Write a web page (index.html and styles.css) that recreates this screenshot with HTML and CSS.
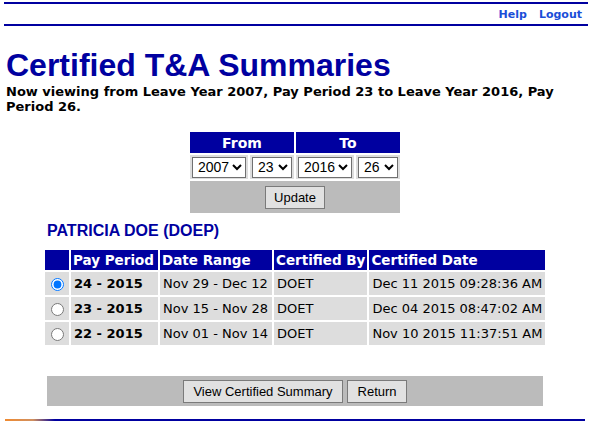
FILE: index.html
```html
<!DOCTYPE html>
<html>
<head>
<meta charset="utf-8">
<link rel="stylesheet" href="styles.css">
</head>
<body>
<div class="page">
  <div class="topbar">
    <a href="#" class="toplink">Help</a>
    <a href="#" class="toplink">Logout</a>
  </div>
  <h1 class="title">Certified T&amp;A Summaries</h1>
  <p class="subtitle">Now viewing from Leave Year 2007, Pay Period 23 to Leave Year 2016, Pay Period 26.</p>

  <table class="range">
    <tr>
      <th colspan="2" class="range-head">From</th>
      <th colspan="2" class="range-head">To</th>
    </tr>
    <tr>
      <td class="range-cell"><select class="sel sel-year"><option>2007</option></select></td>
      <td class="range-cell"><select class="sel sel-pp"><option>23</option></select></td>
      <td class="range-cell"><select class="sel sel-year"><option>2016</option></select></td>
      <td class="range-cell"><select class="sel sel-pp"><option>26</option></select></td>
    </tr>
    <tr>
      <td colspan="4" class="range-action"><button class="btn">Update</button></td>
    </tr>
  </table>

  <h2 class="name">PATRICIA DOE (DOEP)</h2>

  <table class="summary">
    <tr>
      <th class="col-radio"></th>
      <th class="col-pp">Pay Period</th>
      <th class="col-range">Date Range</th>
      <th class="col-by">Certified By</th>
      <th class="col-date">Certified Date</th>
    </tr>
    <tr>
      <td class="radio-cell"><input type="radio" name="pp" checked></td>
      <td class="pp">24 - 2015</td>
      <td>Nov 29 - Dec 12</td>
      <td>DOET</td>
      <td>Dec 11 2015 09:28:36 AM</td>
    </tr>
    <tr>
      <td class="radio-cell"><input type="radio" name="pp"></td>
      <td class="pp">23 - 2015</td>
      <td>Nov 15 - Nov 28</td>
      <td>DOET</td>
      <td>Dec 04 2015 08:47:02 AM</td>
    </tr>
    <tr>
      <td class="radio-cell"><input type="radio" name="pp"></td>
      <td class="pp">22 - 2015</td>
      <td>Nov 01 - Nov 14</td>
      <td>DOET</td>
      <td>Nov 10 2015 11:37:51 AM</td>
    </tr>
  </table>

  <div class="actions">
    <button class="btn btn-wide">View Certified Summary</button>
    <button class="btn btn-wide">Return</button>
  </div>

  <div class="footer-line"></div>
</div>
</body>
</html>
```

FILE: styles.css
```css
html, body {
  margin: 0;
  padding: 0;
  background: #fff;
}
.page {
  width: 584px;
  margin-left: 4px;
  padding-top: 2px;
  font-family: "DejaVu Sans", Verdana, sans-serif;
  color: #000;
}
.topbar {
  border-top: 2px solid #0000a0;
  border-bottom: 2px solid #0000a0;
  height: 20px;
  display: flex;
  justify-content: flex-end;
  align-items: center;
  gap: 12px;
  padding-right: 6px;
}
.toplink {
  font-size: 11px;
  font-weight: bold;
  color: #1a4ed8;
  text-decoration: none;
}
.title {
  font-family: "Liberation Sans", Arial, sans-serif;
  font-size: 32px;
  font-weight: bold;
  color: #0000a0;
  margin: 22px 0 0 2px;
  line-height: 34px;
}
.subtitle {
  font-size: 13px;
  font-weight: bold;
  line-height: 15px;
  margin: 2px 0 0 2px;
  width: 560px;
}
.range {
  margin: 16px auto 0;
  border-collapse: separate;
  border-spacing: 2px;
  position: relative;
  left: -1px;
}
.range-head {
  background: #0000a0;
  color: #fff;
  font-size: 14px;
  font-weight: bold;
  height: 21px;
  padding: 0;
  text-align: center;
}
.range-cell {
  background: #dddddd;
  padding: 1px 2px;
  height: 22px;
}
.sel {
  font-family: "Liberation Sans", Arial, sans-serif;
  font-size: 14px;
  height: 21px;
  border: 1px solid #707070;
  border-radius: 0;
  background: #fff;
  color: #000;
  padding: 0 0 0 1px;
  display: block;
}
.sel-year { width: 54px; }
.sel-pp { width: 40px; }
.range-action {
  background: #bbbbbb;
  text-align: center;
  padding: 4px 0 4px;
  height: 24px;
}
.btn {
  font-family: "Liberation Sans", Arial, sans-serif;
  font-size: 13px;
  height: 23px;
  padding: 0 8px;
  background: #e1e1e1;
  border: 1px solid #7a7a7a;
  border-radius: 0;
  color: #000;
}
.btn-wide {
  padding: 0 9.5px;
}
.name {
  font-family: "Liberation Sans", Arial, sans-serif;
  font-size: 16px;
  font-weight: bold;
  color: #0000a0;
  margin: 7px 0 0 43px;
  line-height: 18px;
}
.summary {
  margin: 8px 0 0 39px;
  border-collapse: separate;
  border-spacing: 2px;
  font-size: 13px;
}
.summary th {
  background: #0000a0;
  color: #fff;
  font-weight: bold;
  text-align: left;
  height: 20px;
  padding: 0 2px;
  font-size: 13.5px;
  white-space: nowrap;
}
.summary td {
  background: #dddddd;
  height: 23px;
  padding: 0 3px;
  white-space: nowrap;
}
.col-radio { width: 20px; }
.col-pp { width: 83px; }
.col-range { width: 108px; }
.col-by { width: 87px; }
.col-date { width: 172px; }
.summary td.radio-cell {
  padding: 0;
  text-align: center;
}
.radio-cell input {
  margin: 0;
  width: 13px;
  height: 13px;
  vertical-align: middle;
}
.pp {
  font-weight: bold;
}
.actions {
  margin: 29px 0 0 43px;
  width: 496px;
  height: 30px;
  background: #bbbbbb;
  display: flex;
  justify-content: center;
  align-items: center;
  gap: 4px;
}
.footer-line {
  margin-top: 13px;
  width: 580px;
  margin-left: 1px;
  height: 2px;
  background: linear-gradient(to right, #f08a30 0px, #d09060 28px, #0000a0 50px, #0000a0 100%);
}
```
